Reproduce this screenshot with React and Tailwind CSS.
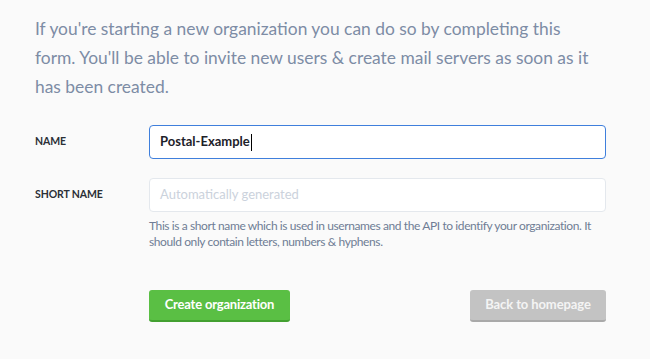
export default function App() {
  return (
    <div className="w-[650px] h-[359px] bg-[#fafafa] pl-[35px] pr-[44px] pt-[14px] font-['Lato',sans-serif] overflow-hidden">
      <p className="text-[17.4px] leading-[29px] text-[#7d8ca5] whitespace-nowrap">
        If you're starting a new organization you can do so by completing this<br />
        form. You'll be able to invite new users &amp; create mail servers as soon as it<br />
        has been created.
      </p>
      <div className="mt-[24px] flex items-center">
        <div className="w-[114px] text-[10.5px] font-bold text-[#2b2f36] tracking-[-0.1px]">NAME</div>
        <div className="flex-1 h-[34px] bg-white border border-[#3f7fdc] rounded-[4px] flex items-center pl-[10px]">
          <span className="text-[13px] font-bold text-[#1d2129]">Postal-Example</span>
          <span className="w-px h-[17px] bg-black ml-[1px]"></span>
        </div>
      </div>
      <div className="mt-[19px] flex items-center">
        <div className="w-[114px] text-[10.5px] font-bold text-[#2b2f36] tracking-[-0.1px]">SHORT NAME</div>
        <div className="flex-1 h-[34px] bg-white border border-[#e4e8ed] rounded-[4px] flex items-center pl-[10px]">
          <span className="text-[13px] text-[#cbd2dc]">Automatically generated</span>
        </div>
      </div>
      <div className="ml-[114px] mt-[6px] text-[12px] leading-[16px] text-[#6f7d95] tracking-[-0.4px] whitespace-nowrap">
        This is a short name which is used in usernames and the API to identify your organization. It<br />
        should only contain letters, numbers &amp; hyphens.
      </div>
      <div className="ml-[114px] mt-[40px] flex justify-between">
        <button className="w-[141px] h-[32px] bg-[#5abf44] border-b-2 border-[#43a030] rounded-[3px] text-white text-[13px] font-bold tracking-[-0.2px]">Create organization</button>
        <button className="w-[136px] h-[32px] bg-[#c3c3c3] border-b-2 border-[#a9a9a9] rounded-[3px] text-[#f4f4f4] text-[13px] font-bold tracking-[-0.1px]">Back to homepage</button>
      </div>
    </div>
  );
}
